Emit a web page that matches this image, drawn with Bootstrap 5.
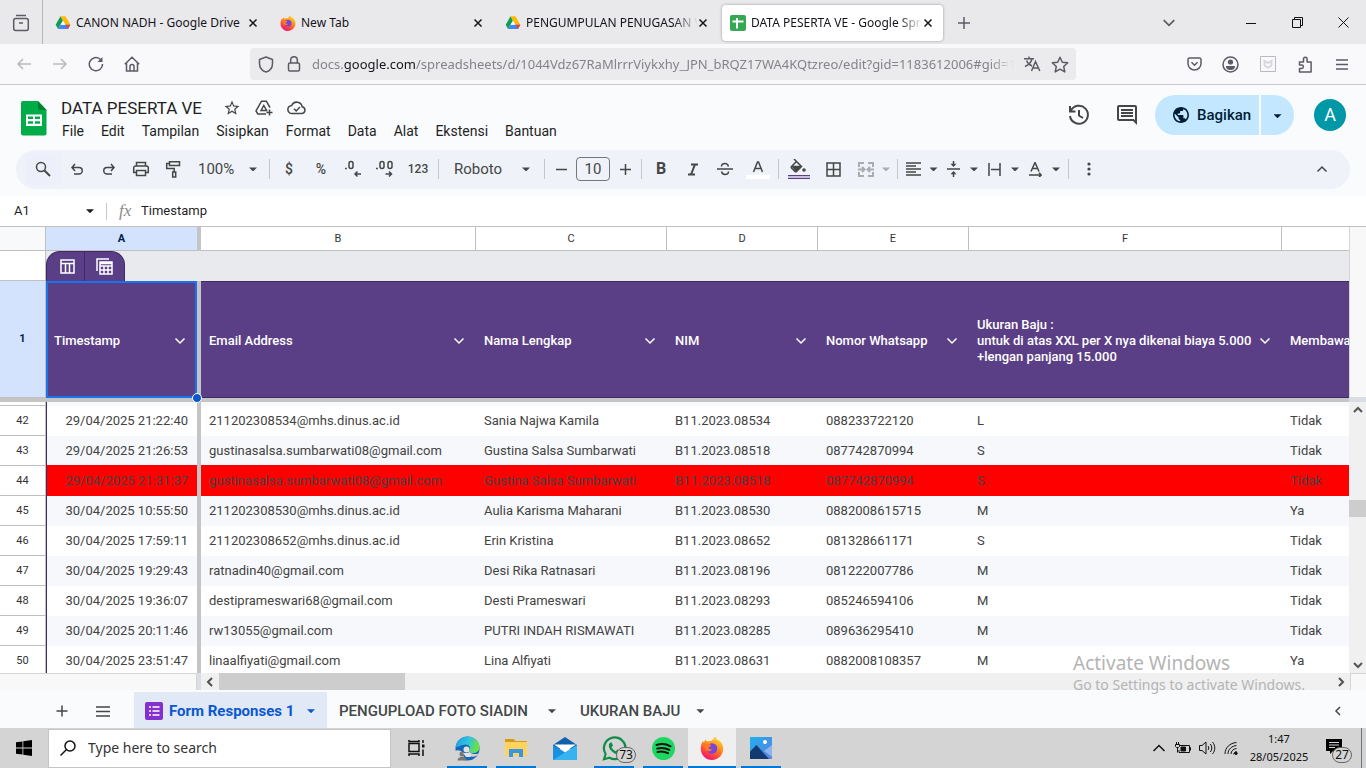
<!DOCTYPE html>
<html lang="id">
<head>
<meta charset="utf-8">
<meta name="viewport" content="width=device-width, initial-scale=1">
<title>DATA PESERTA VE - Google Spreadsheet</title>
<link href="https://cdn.jsdelivr.net/npm/bootstrap@5.3.0/dist/css/bootstrap.min.css" rel="stylesheet">
<style>
:root{--segoe:"Noto Sans","Open Sans",sans-serif;--goog:Roboto,"Liberation Sans",sans-serif;--line:#c0c0c0;--violet:#5b3f86;--violet-dark:#3f2a63;--ink:#444746}
body{font-family:var(--goog);font-size:14px;line-height:20px;color:#1f1f1f;background:#f9fbfd}
button{border:0;background:none;padding:0;color:inherit;font:inherit;flex:none}
svg{display:block;flex:none}
.ln{fill:none;stroke:currentColor;stroke-width:1.5}
.thin{stroke-width:1}
.thick{stroke-width:2}
.mat{fill:currentColor}
a{color:inherit;text-decoration:none}
/* browser chrome */
.tabstrip{height:44px;padding-top:1px;background:#e9e9eb;font-family:var(--segoe);font-size:12px;color:#15141a}
.strip-first{width:42px;color:#5b5b66}
.strip-rule{width:1px;background:#b4b4b9;margin:-1px 2px 0 0}
.strip-tool{color:#5b5b66}
.btab{width:221px;height:36px;margin:0 2px;padding:0 10px 0 8px;border-radius:4px}
.btab.on{background:#fff;box-shadow:0 0 3px rgba(0,0,0,.35)}
.btab-title{overflow:hidden;white-space:nowrap;flex:1;margin-left:5px}
.fade-end{-webkit-mask-image:linear-gradient(90deg,#000 calc(100% - 24px),transparent);mask-image:linear-gradient(90deg,#000 calc(100% - 24px),transparent)}
.winbtn{width:46px;color:#111}
.navbar-ff{height:41px;padding:0 6px;background:#f9f9fb;border-bottom:1px solid #c8c8cc;color:#5b5b66}
.navbar-ff button{width:36px;height:36px}
.navbar-ff button svg{margin:auto}
.dim{opacity:.4}
.side-gap{margin:0 2px}
.urlbox{height:32px;border-radius:4px;background:#ebebed;margin-left:100px;padding:0 2px;width:826px;font-family:var(--segoe);font-size:13px}
.urlbox button{width:28px}
.urltext{overflow:hidden;white-space:nowrap;color:#83838a;flex:1;margin:0 4px}
.urltext b{font-weight:400;color:#15141a}
/* document header */
.dochead{height:65px;padding:0 20px 0 21px}
.titlebox{padding:11px 0 0 14px}
.titlerow{height:24px;gap:14px;color:var(--ink)}
.doctitle{font-size:17px;line-height:24px;color:#1f1f1f;margin:0 7px 0 0;font-weight:400}
.menus{gap:17px;padding:1px 0 0 1px}
.headright{height:60px;color:var(--ink)}
.share{height:40px;border-radius:20px;background:#c2e7ff;color:#001d35;font-weight:500;overflow:hidden}
.share-main{width:106px;padding-left:18px;font-size:15px;border-right:2px solid #f9fbfd}
.share-more{width:33px}
.avatar{width:32px;height:32px;margin-left:20px;border-radius:50%;background:#0097a7;color:#fff;font-size:18px}
/* toolbar */
.tools{height:40px;margin:0 16px;border-radius:20px;background:#eff2f8;padding:0 12px 0 9px;color:var(--ink)}
.tools button{width:32px;height:32px}
.tools .finder{width:36px;background:#edf0fa}
.tools .w34{width:34px}.tools .w41{width:41px}.tools .w26{width:26px}
.tools .zoomer{width:77px;padding:0 9px;font-size:15px}
.tools .fonter{width:99px;padding:0 11px 0 12px;font-size:15px}
.tools .digits{font-size:12px;font-weight:500}
.tsep{width:1px;height:20px;background:#c7c7c7;margin:0 3px}
.fsize{width:34px;height:24px;margin:0 2px;border:1px solid #747775;border-radius:4px;background:none;text-align:center;color:var(--ink);font-size:15px;padding:0}
.caret{width:8px;height:4px;background:currentColor;clip-path:polygon(0 0,100% 0,50% 100%);display:inline-block;flex:none}
.caret-far{margin-left:20px}
/* formula row */
.formula{height:30px;margin-top:7px;background:#fff;font-size:13px}
.formula input{border:0;background:none;padding:0;color:#1f1f1f;outline:0}
.cellref{width:72px;margin-left:14px}
.fsep{width:1px;height:17px;background:#c7c7c7;margin:0 12px}
.fx{font:italic 17px "Liberation Serif",serif;color:#8a8a8a;width:22px}
/* grid */
.sheetarea{border-top:1px solid var(--line);min-height:0;background:#fff}
.viewport{overflow:hidden;min-height:0}
.cells{table-layout:fixed;width:100%;border-collapse:separate;border-spacing:0;font-size:13px;line-height:16px;color:#434343}
.c-num{width:46px}.c-a,.c-d{width:151px}.c-bar{width:4px}.c-b{width:275px}.c-c{width:191px}.c-f{width:313px}
.cells th,.cells td{padding:0 8px;overflow:hidden;white-space:nowrap;font-weight:400}
.cells .bar{background:#c5c5c5;padding:0}
.cells .cols th{height:24px;text-align:center;font-size:11px;border-right:1px solid var(--line);border-bottom:1px solid var(--line);color:#333;padding:0}
.cells .cols .sel,.cells .head .rown{background:#d3e3fd;color:#041e49;font-weight:700}
.cells .rown{font-size:11px;text-align:center;border-right:1px solid var(--line);border-bottom:1px solid var(--line);padding:0;color:#333}
.cells .group td{height:30px;background:#e8eaed;padding:0;vertical-align:bottom}
.cells .group .rown{background:#fff}
.cells .head th{height:117px}
.cells .head th:not(.rown){background:var(--violet);color:#fff;font-weight:500;padding:2px 9px 0 8px;border-top:1px solid var(--violet-dark);border-bottom:1px solid var(--violet-dark)}
.cells .head .picked:not(.rown){position:relative;overflow:visible;border:0;box-shadow:inset 0 0 0 2px #1a73e8}
.cells .head .bar:not(.rown){background:#c5c5c5;border:0;padding:0}
.cells .head .lastcol:not(.rown){padding-right:0}
.knob{position:absolute;right:-5px;bottom:-5px;width:10px;height:10px;border-radius:50%;background:#0b57d0;border:1px solid #fff;z-index:2}
.cells .frozen td{height:4px;padding:0;background:#c5c5c5}
.cells .sliver td,.cells .sliver th{height:4px;padding:0}
.cells .entry th,.cells .entry td{height:30px}
.cells .odd td:not(.bar){background:#f6f8fb}
.cells .flag td:not(.bar){background:#f00;box-shadow:0 -1px 0 #f00}
.cells .stamp{border-left:1px solid var(--violet-dark);text-align:right;padding-right:9px}
.hname{overflow:hidden;flex:1;white-space:pre}
.tablechip{width:79px;height:30px;background:var(--violet);border-radius:14px 14px 0 0;color:#fff;border:1px solid var(--violet-dark);border-bottom:0}
.tablechip button{height:29px;width:37px;padding-left:3px}
.tablechip button+button{width:40px;padding:0;border-left:1px solid var(--violet-dark)}
.gutter{width:17px;flex:none;background:#f0f0f0;color:#555}
.gutter-top{height:170px;background:#f8f8f8;border-left:1px solid #d5d5d5}
.gutter-mid{height:5px;background:#dadce6}
.vthumb{height:17px;background:#cdcdcd;margin-top:86px}
.hscroll{height:17px;background:#f0f0f0;color:#505050}
.hs-left{width:197px;background:#f8f8f8;border-top:1px solid #d5d5d5;border-right:1px solid #d5d5d5}
.hs-mid{width:4px;background:#dadce6}
.hthumb{width:186px;background:#cdcdcd}
.hs-end{width:16px;background:#f8f8f8;border:1px solid #d5d5d5;border-width:1px 0 0 1px}
/* sheet tabs */
.sheets{height:38px;padding-top:2px;color:var(--ink);font-weight:500;font-size:15px}
.sheets button{padding-top:2px}
.sheets .stab{padding:2px 12px 0}
.sheets .on{background:#e1e9f7;color:#0b57d0;font-weight:700;width:193px;padding:2px 12px 0 11px;gap:6px}
/* watermark */
.water{position:absolute;right:57px;bottom:72px;min-width:236px;font-family:var(--segoe);color:#b4b4b4;line-height:22px;font-size:14px;pointer-events:none;white-space:nowrap}
.water strong{font-weight:400;font-size:19px;display:block}
/* taskbar */
.taskbar{height:40px;background:#d4d4d4;color:#111;font-family:var(--segoe)}
.startbtn{width:48px}
.searchbox{width:343px;height:39px;background:#fff;border:1px solid #c4c4c4;font-size:14px;padding-left:11px;gap:12px}
.searchbox input{border:0;outline:0;background:none;flex:1;color:#333;padding:0}
.searchbox input::placeholder{color:#333;opacity:1}
.app{width:48px;height:40px;margin-right:1px;position:relative}
.app.taskview{width:50px;margin-right:2px}
.run::after{content:"";position:absolute;left:4px;right:4px;bottom:0;height:2px;background:#0078d7}
.run.front{background:#efefef}.run.front::after{left:0;right:0}
.count{position:absolute;font-size:12px;line-height:14px;border:1px solid #666;border-radius:8px;background:#d4d4d4;width:20px;text-align:center;left:26px;top:19px}
.tray{width:24px}
.clock{width:72px;font-size:11px;line-height:18px;text-align:center}
.notify{width:34px}
.notify .count{left:13px}
</style>
</head>
<body class="vh-100 d-flex flex-column overflow-hidden position-relative">
<svg width="0" height="0" class="position-absolute" aria-hidden="true">
<defs>
<linearGradient id="ffg" x1=".8" y1="0" x2=".3" y2="1"><stop offset="0" stop-color="#ffe03a"/><stop offset=".45" stop-color="#ff8a16"/><stop offset=".8" stop-color="#ff3647"/><stop offset="1" stop-color="#e31587"/></linearGradient>
<linearGradient id="edg" x1="0" y1="0" x2="1" y2=".3"><stop offset="0" stop-color="#1b9de2"/><stop offset=".55" stop-color="#2fc3df"/><stop offset="1" stop-color="#6be04a"/></linearGradient>
<linearGradient id="phg" x1="0" y1="0" x2="1" y2="1"><stop offset="0" stop-color="#1fb0ee"/><stop offset="1" stop-color="#5f7fe0"/></linearGradient>
<symbol id="drive" viewBox="0 0 24 24"><path fill="#0f9d58" d="M8.2 2 1 14.6 4.6 21l7.3-12.6z"/><path fill="#ffba00" d="M8.2 2h7.5L23 14.6h-7.4z"/><path fill="#4285f4" d="M8.6 14.6H23L19.4 21H4.6z"/><path fill="#ea4335" d="M15.6 14.6H23L19.4 21z"/><path fill="#fff" d="m12 8.7 3.4 5.9H8.6z" opacity=".9"/></symbol>
<symbol id="firefox" viewBox="0 0 24 24"><path fill="url(#ffg)" d="M15.3.5c1 1.4 1.6 2.6 1.8 3.7l1.4-.3c2.9 2.1 4.700 5 4.700 8.600C23.200 18.900 18.200 24 12 24S.8 19 .8 12.700c0-3.200.8-5.800 2.400-7.700l.6 1.800 1.500-3.300 1.600 2.100c1.300-.7 2.800-.7 4.200-.5 1.200-1 2.600-2.600 4.200-4.600z"/><circle cx="12" cy="12.500" r="5.300" fill="#7b45d8"/><path fill="#ff7a22" d="M4.500 8.500c2.500-1.500 5.500-.5 7 1.500-1.700.2-2.500.9-3 2 .8 1.300 2.300 1.800 4 1.200-1.200 2-3.800 2.700-6 1.300C5 13.300 4 11 4.500 8.500z"/></symbol>
<symbol id="close" viewBox="0 0 10 10"><path d="m1.500 1.500 7 7m0-7-7 7" class="ln"/></symbol>
<symbol id="cv" viewBox="0 0 12 12"><path d="m1.500 3.500 4.500 4.500 4.500-4.500" class="ln"/></symbol>
<symbol id="star" viewBox="0 0 24 24"><path d="m22 9.240-7.190-.62L12 2 9.190 8.630 2 9.240l5.460 4.730L5.820 21 12 17.270 18.180 21l-1.630-7.030L22 9.240zM12 15.400l-3.760 2.270 1-4.280-3.320-2.880 4.380-.38L12 6.100l1.710 4.040 4.380.38-3.320 2.880 1 4.280L12 15.400z"/></symbol>
</defs></svg>

<header>
<div class="tabstrip d-flex align-items-center">
 <button class="strip-first d-flex justify-content-center" aria-label="Firefox View"><svg width="18" height="18" viewBox="0 0 18 18" class="ln"><path d="M4 1.500h10"/><rect x="1.700" y="4.500" width="14.600" height="12" rx="2"/><path d="M7 9h4"/></svg></button>
 <span class="strip-rule align-self-stretch"></span>
 <div class="btab d-flex align-items-center"><svg width="16" height="16"><use href="#drive"/></svg><span class="btab-title">CANON NADH - Google Drive</span><button aria-label="Tutup"><svg width="10" height="10"><use href="#close"/></svg></button></div>
 <div class="btab d-flex align-items-center"><svg width="16" height="16"><use href="#firefox"/></svg><span class="btab-title">New Tab</span><button aria-label="Tutup"><svg width="10" height="10"><use href="#close"/></svg></button></div>
 <div class="btab d-flex align-items-center"><svg width="16" height="16"><use href="#drive"/></svg><span class="btab-title fade-end">PENGUMPULAN PENUGASAN VE</span><button aria-label="Tutup"><svg width="10" height="10"><use href="#close"/></svg></button></div>
 <div class="btab on d-flex align-items-center"><svg width="16" height="16" viewBox="0 0 16 16"><rect width="16" height="16" rx="2" fill="#34a853"/><path d="M2.500 6.500h11M7 3v10.500" stroke="#fff" stroke-width="2"/></svg><span class="btab-title fade-end">DATA PESERTA VE - Google Spreadsheet</span><button aria-label="Tutup"><svg width="10" height="10"><use href="#close"/></svg></button></div>
 <button class="strip-tool ms-2 ps-1" aria-label="Tab baru"><svg width="14" height="14" viewBox="0 0 14 14" class="ln"><path d="M7 1v12M1 7h12"/></svg></button>
 <button class="strip-tool ms-auto me-5 px-1" aria-label="Daftar tab"><svg width="14" height="14"><use href="#cv"/></svg></button>
 <button class="winbtn d-flex justify-content-center" aria-label="Minimalkan"><svg width="10" height="10" viewBox="0 0 10 10" class="ln thin"><path d="M0 5.500h10"/></svg></button>
 <button class="winbtn d-flex justify-content-center" aria-label="Pulihkan"><svg width="11" height="11" viewBox="0 0 11 11" class="ln thin"><path d="M.5 2.500h8v8h-8zM2.500 2.500v-2h8v8h-2"/></svg></button>
 <button class="winbtn d-flex justify-content-center" aria-label="Tutup jendela"><svg width="11" height="11" viewBox="0 0 11 11" class="ln thin"><path d="m.5.5 10 10m0-10-10 10"/></svg></button>
</div>
<div class="navbar-ff d-flex align-items-center">
 <div class="d-flex">
 <button class="d-flex dim" aria-label="Kembali"><svg width="16" height="16" viewBox="0 0 16 16" class="ln"><path d="M15 8H2m5-5L2 8l5 5"/></svg></button>
 <button class="d-flex dim" aria-label="Maju"><svg width="16" height="16" viewBox="0 0 16 16" class="ln"><path d="M1 8h13M9 3l5 5-5 5"/></svg></button>
 <button class="d-flex" aria-label="Muat ulang"><svg width="16" height="16" viewBox="0 0 16 16" class="ln"><path d="M14.500 8A6.600 6.600 0 1 1 12 3l1.500 1.500"/><path d="M14.500 1v5h-5z" fill="currentColor" stroke="none"/></svg></button>
 <button class="d-flex" aria-label="Beranda"><svg width="16" height="16" viewBox="0 0 16 16" class="ln"><path d="M.8 8.200 8 1.300l7.200 6.900M2.500 7v8h11V7M6 15v-4.500a2 2 0 0 1 4 0V15"/></svg></button>
 </div>
 <div class="urlbox d-flex align-items-center">
  <button class="d-flex" aria-label="Perlindungan"><svg width="16" height="17" viewBox="0 0 16 17" class="ln"><path d="M8 1 14.500 3.500v4C14.500 12 11.500 15 8 16 4.500 15 1.500 12 1.500 7.500v-4z" stroke-linejoin="round"/></svg></button>
  <button class="d-flex" aria-label="Sambungan aman"><svg width="14" height="16" viewBox="0 0 14 16" class="ln"><rect x="1.500" y="7" width="11" height="8" rx="1.500"/><path d="M3.700 7V4a3.300 3.300 0 0 1 6.600 0v3"/></svg></button>
  <div class="urltext fade-end">docs.<b>google.com</b>/spreadsheets/d/1044Vdz67RaMlrrrViykxhy_JPN_bRQZ17WA4KQtzreo/edit?gid=1183612006#gid=1183612006</div>
  <button class="d-flex" aria-label="Terjemahkan"><svg width="17" height="16" viewBox="0 0 17 16" class="ln"><path d="M0 2.700h10M5 .5v2M8 3C7 6.500 4.500 9 1 10.500M2.500 4.500c1 2.500 3 4.500 5.500 5.500M7.500 15l4-9.500L15.800 15M9 12h5.500"/></svg></button>
  <button class="d-flex" aria-label="Markah"><svg width="18" height="17" viewBox="0 0 18 17" class="ln"><path d="m9 1.200 2.300 5 5.400.6-4 3.700 1.100 5.400L9 13.200l-4.800 2.700 1.100-5.400-4-3.700 5.400-.6z" stroke-linejoin="round"/></svg></button>
 </div>
 <div class="ms-auto d-flex">
 <button class="d-flex" aria-label="Pocket"><svg width="15" height="14" viewBox="0 0 15 14" class="ln"><path d="M2.500 1h10A1.500 1.500 0 0 1 14 2.500v4a6.500 6.500 0 0 1-13 0v-4A1.500 1.500 0 0 1 2.500 1zM4.500 5.300l3 2.900 3-2.900"/></svg></button>
 <button class="d-flex" aria-label="Akun"><svg width="17" height="17" viewBox="0 0 17 17"><circle cx="8.500" cy="8.500" r="7.500" class="ln"/><circle cx="8.500" cy="6" r="2.600" fill="currentColor"/><path d="M4 10h9c0 3-2 4-4.500 4S4 13 4 10z" fill="currentColor"/></svg></button>
 <button class="d-flex side-gap dim" aria-label="McAfee"><svg width="16" height="16" viewBox="0 0 16 16" class="ln thin"><path d="M.5.5h15v15H.5z"/><path d="M4.500 5v4.500L8 11.500l3.500-2V5L8 6.800z" stroke-width="2" opacity=".5"/></svg></button>
 <button class="d-flex" aria-label="Ekstensi"><svg width="16" height="17" viewBox="0 0 16 17" class="ln"><path d="M1.500 6h4V3a1.800 1.800 0 0 1 3.600 0v3h4v10H1.500v-3.500h2.200a1.700 1.700 0 0 0 0-3.400H1.500z" stroke-linejoin="round"/></svg></button>
 <button class="d-flex" aria-label="Menu"><svg width="12" height="11" viewBox="0 0 12 11" class="ln"><path d="M0 1h12M0 5.500h12M0 10h12"/></svg></button>
 </div>
</div>
</header>

<section class="dochead d-flex">
 <svg class="mt-3" width="26" height="35" viewBox="0 0 26 35"><path fill="#00ac47" d="M2 0h15l8.500 9v23.500a2 2 0 0 1-2 2H2a2 2 0 0 1-2-2V2a2 2 0 0 1 2-2z"/><path fill="#00832d" d="M17 0v7a2 2 0 0 0 2 2h6.500z"/><path fill="#fff" d="M5 13.500h16V25H5zm2 2v2.500h5v-2.500zm7 0v2.500h5v-2.500zm-7 4.700v2.600h5v-2.600zm7 0v2.600h5v-2.600z"/></svg>
 <div class="titlebox">
  <div class="titlerow d-flex align-items-center"><h1 class="doctitle">DATA PESERTA VE</h1>
   <button aria-label="Bintangi"><svg width="18" height="18" class="mat"><use href="#star"/></svg></button>
   <button aria-label="Pindahkan"><svg width="18" height="18" viewBox="0 0 18 18" class="ln"><path d="M11 15H2.800L1 12l5.500-9.800h4.800L15 8.500M6 11.500l2.800-5 2.800 5zM14.500 10.500v6m-3-3h6"/></svg></button>
   <button aria-label="Status dokumen"><svg width="20" height="16" viewBox="0 0 20 16" class="ln"><path d="M5 13.500a4 4 0 0 1-.3-8 5.500 5.500 0 0 1 10.500 1.300 3.400 3.400 0 0 1-.2 6.700zM7 8.700l2.200 2.200L13 7"/></svg></button>
  </div>
  <nav class="menus d-flex"><a href="#">File</a><a href="#">Edit</a><a href="#">Tampilan</a><a href="#">Sisipkan</a><a href="#">Format</a><a href="#">Data</a><a href="#">Alat</a><a href="#">Ekstensi</a><a href="#">Bantuan</a></nav>
 </div>
 <div class="headright ms-auto d-flex align-items-center">
  <button class="me-4" aria-label="Riwayat"><svg width="24" height="24" viewBox="0 0 24 24" class="ln thick"><path d="M4 7.500A9 9 0 1 1 3 13M3 3v5.500h5.500M12 7v5.500l4 2.500"/></svg></button>
  <button class="me-3" aria-label="Komentar"><svg width="24" height="24" viewBox="0 0 24 24" class="mat"><path d="M22 4c0-1.100-.9-2-2-2H4c-1.100 0-2 .9-2 2v12c0 1.100.9 2 2 2h14l4 4V4zm-2 13.200-1.200-1.200H4V4h16zM6 12h12v2H6zm0-3h12v2H6zm0-3h12v2H6z"/></svg></button>
  <div class="share d-flex">
   <button class="share-main d-flex align-items-center gap-2"><svg width="16" height="16" viewBox="2 2 20 20" class="mat"><path d="M12 2C6.480 2 2 6.480 2 12s4.480 10 10 10 10-4.480 10-10S17.520 2 12 2zm-1 17.930c-3.950-.49-7-3.850-7-7.930 0-.62.080-1.210.210-1.790L9 15v1c0 1.100.9 2 2 2v1.930zm6.900-2.540c-.26-.81-1-1.390-1.900-1.390h-1v-3c0-.55-.45-1-1-1H8v-2h2c.55 0 1-.45 1-1V7h2c1.100 0 2-.9 2-2v-.41c2.930 1.190 5 4.060 5 7.410 0 2.080-.8 3.970-2.100 5.390z"/></svg>Bagikan</button>
   <button class="share-more" aria-label="Opsi berbagi"><span class="caret align-middle"></span></button>
  </div>
  <button class="avatar">A</button>
 </div>
</section>

<section class="tools d-flex align-items-center" aria-label="Toolbar">
 <button class="finder d-flex align-items-center justify-content-center" aria-label="Menu"><svg width="16" height="16" viewBox="0 0 16 16" class="ln"><circle cx="6" cy="6" r="4.500"/><path d="m9.500 9.500 5.500 5.500" stroke-width="2"/></svg></button>
 <button class="d-flex align-items-center justify-content-center" aria-label="Urungkan"><svg width="14" height="14" viewBox="0 0 14 14" class="ln"><path d="M5 2 2 5.500 5 9M2 5.500h7a3.200 3.200 0 0 1 0 6.500H4"/></svg></button>
 <button class="d-flex align-items-center justify-content-center" aria-label="Ulangi"><svg width="14" height="14" viewBox="0 0 14 14" class="ln"><path d="m9 2 3 3.500L9 9m3-3.500H5a3.200 3.200 0 0 0 0 6.500h5"/></svg></button>
 <button class="d-flex align-items-center justify-content-center" aria-label="Cetak"><svg width="18" height="16" viewBox="0 0 18 16" class="ln"><path d="M4.500 5V1.500h9V5M4.500 11.500H1.700V7a2 2 0 0 1 2-2h10.600a2 2 0 0 1 2 2v4.500h-2.800"/><path d="M4.500 9.500h9v5h-9z"/></svg></button>
 <button class="d-flex align-items-center justify-content-center" aria-label="Salin format"><svg width="16" height="18" viewBox="0 0 16 18" class="ln"><path d="M4.500 1.700h10v3.800h-10zM4.500 3.500H1.700v5h7.500V12"/><path d="M7.700 12h3v5h-3z"/></svg></button>
 <button class="zoomer d-flex align-items-center justify-content-between">100%<span class="caret"></span></button>
 <span class="tsep"></span>
 <button class="fw-medium">$</button><button class="fw-medium">%</button>
 <button class="d-flex align-items-center justify-content-center" aria-label="Kurangi desimal"><svg width="18" height="18" viewBox="0 0 18 18" class="ln"><path d="M1 8.500h1.800"/><rect x="5" y="1.500" width="4" height="7" rx="2"/><path d="M17 14h-6m2.500-2.500L11 14l2.500 2.500"/></svg></button>
 <button class="d-flex align-items-center justify-content-center" aria-label="Tambah desimal"><svg width="18" height="18" viewBox="0 0 18 18" class="ln"><path d="M0 8.500h1.800"/><rect x="4" y="1.500" width="4" height="7" rx="2"/><rect x="12" y="1.500" width="4" height="7" rx="2"/><path d="M9.500 14h6M13 11.500l2.500 2.500-2.500 2.500"/></svg></button>
 <button class="w34 digits">123</button>
 <span class="tsep"></span>
 <button class="fonter d-flex align-items-center justify-content-between">Roboto<span class="caret"></span></button>
 <span class="tsep"></span>
 <button class="w26 d-flex align-items-center justify-content-center" aria-label="Perkecil"><svg width="11" height="11" viewBox="0 0 11 11" class="ln"><path d="M0 5.500h11"/></svg></button>
 <input class="fsize" value="10" aria-label="Ukuran font">
 <button class="w26 d-flex align-items-center justify-content-center" aria-label="Perbesar"><svg width="11" height="11" viewBox="0 0 11 11" class="ln"><path d="M0 5.500h11M5.500 0v11"/></svg></button>
 <span class="tsep"></span>
 <button class="fw-bold fs-6">B</button>
 <button class="d-flex align-items-center justify-content-center" aria-label="Miring"><svg width="12" height="13" viewBox="0 0 12 13" class="ln thick"><path d="M4 1.500h7M1 11.500h7M8 1.500l-4 10"/></svg></button>
 <button class="d-flex align-items-center justify-content-center" aria-label="Coret"><svg width="16" height="14" viewBox="0 0 16 14" class="ln"><path d="M0 7h16M11.500 4.500C11 2.500 10 1.500 8 1.500S4.500 2.500 4.500 4.500M4.500 9.500c.5 2 1.500 3 3.500 3s3.500-1 3.500-3"/></svg></button>
 <button class="w34 d-flex align-items-center justify-content-center" aria-label="Warna teks"><svg width="24" height="20" viewBox="0 0 24 20"><path d="m7.500 13 4-10h1l4 10M9 9.500h6" class="ln"/><path fill="#fff" d="M0 16h24v4H0z"/></svg></button>
 <span class="tsep"></span>
 <button class="w34 d-flex align-items-center justify-content-center" aria-label="Warna isi"><svg width="24" height="20" viewBox="0 0 24 20"><path d="m7 0 7.500 7.500-5 5a1 1 0 0 1-1.500 0L4.500 9a1 1 0 0 1 0-1.500L9 3M5 7.500h9" class="ln"/><path d="M5 8h9l-5 5z" fill="currentColor"/><circle cx="17" cy="11" r="1.800" fill="currentColor"/><path fill="#c9bedd" d="M1 16h22v4H1z"/><path fill="#5b3f86" d="M1 16h22v1H1zM1 19h22v1H1z"/></svg></button>
 <button class="w34 d-flex align-items-center justify-content-center" aria-label="Batas"><svg width="15" height="15" viewBox="0 0 15 15" class="ln"><path d="M1 1h13v13H1zM7.500 1v13M1 7.500h13"/></svg></button>
 <button class="d-flex align-items-center justify-content-center dim" aria-label="Gabungkan"><svg width="16" height="15" viewBox="0 0 16 15" class="ln thick"><path d="M6 1H1v4M10 1h5v4M1 10v4h5M15 10v4h-5M0 7.500h6M16 7.500h-6M4 5l2.500 2.500L4 10M12 5 9.500 7.500 12 10"/></svg></button>
 <span class="caret dim me-1"></span>
 <span class="tsep"></span>
 <button class="w41 d-flex align-items-center justify-content-around" aria-label="Rata horizontal"><svg width="15" height="14" viewBox="0 0 15 14" class="ln"><path d="M0 1h15M0 4h10M0 7h15M0 10h10M0 13h15"/></svg><span class="caret"></span></button>
 <button class="w41 d-flex align-items-center justify-content-around" aria-label="Rata vertikal"><svg width="13" height="16" viewBox="0 0 13 16" class="ln"><path d="M0 8h13M6.500 0v4M6.500 12v4"/><path d="M3.500 2.800h6l-3 3.200zM3.500 13.200h6l-3-3.200z" fill="currentColor" stroke="none"/></svg><span class="caret"></span></button>
 <button class="w41 d-flex align-items-center justify-content-around" aria-label="Pengemasan"><svg width="13" height="13" viewBox="0 0 13 13" class="ln"><path d="M1 0v13M12 0v13M3 6.500h9"/></svg><span class="caret"></span></button>
 <button class="w41 d-flex align-items-center justify-content-around" aria-label="Rotasi"><svg width="13" height="15" viewBox="0 0 13 15" class="ln"><path d="m2 9.500 4-9 4 9M3.500 6.500h5M0 13h12M10 10.800l2.200 2.200-2.200 2.200"/></svg><span class="caret"></span></button>
 <span class="tsep"></span>
 <button class="w34 d-flex align-items-center justify-content-center" aria-label="Lainnya"><svg width="4" height="14" viewBox="0 0 4 14" class="mat"><circle cx="2" cy="2" r="1.600"/><circle cx="2" cy="7" r="1.600"/><circle cx="2" cy="12" r="1.600"/></svg></button>
 <button class="ms-auto d-flex align-items-center justify-content-center" aria-label="Sembunyikan menu"><svg width="12" height="12" viewBox="0 0 12 12" class="ln"><path d="m1.500 8.500 4.500-4.500 4.500 4.500"/></svg></button>
</section>

<section class="formula d-flex align-items-center">
 <input class="cellref" value="A1" aria-label="Kotak nama"><span class="caret"></span>
 <span class="fsep"></span>
 <span class="fx">fx</span>
 <input class="flex-grow-1" value="Timestamp" aria-label="Rumus">
</section>

<main class="sheetarea flex-grow-1 d-flex">
 <div class="viewport flex-grow-1">
 <table class="cells">
 <colgroup><col class="c-num"><col class="c-a"><col class="c-bar"><col class="c-b"><col class="c-c"><col class="c-d"><col class="c-d"><col class="c-f"><col></colgroup>
 <thead>
 <tr class="cols"><th class="bg-light"></th><th class="sel border-end-0">A</th><th class="bar border-0"></th><th>B</th><th>C</th><th>D</th><th>E</th><th>F</th><th class="border-end-0"></th></tr>
 <tr class="group"><td class="rown"></td><td><div class="tablechip d-flex"><button class="d-flex align-items-center justify-content-center" aria-label="Tabel"><svg width="15" height="15" viewBox="0 0 15 15" class="ln"><path d="M1 1h13v13H1zM1 4.500h13M5.500 5v9M9.500 5v9"/></svg></button><button class="d-flex align-items-center justify-content-center" aria-label="Tampilan tabel"><svg width="17" height="17" viewBox="0 0 17 17" class="ln"><path d="M1 13V1h12"/><path d="M4 4h12v12H4zM4 5.500h12M4 8h12M4 12h12M8 8v8M12 8v8"/></svg></button></div></td><td class="bar"></td><td colspan="6"></td></tr>
 <tr class="head"><th class="rown">1</th>
 <th class="picked"><div class="d-flex align-items-center"><span class="hname">Timestamp</span><svg width="16" height="12"><use href="#cv"/></svg></div><i class="knob"></i></th><th class="bar"></th>
 <th><div class="d-flex align-items-center"><span class="hname">Email Address</span><svg width="16" height="12"><use href="#cv"/></svg></div></th>
 <th><div class="d-flex align-items-center"><span class="hname">Nama Lengkap</span><svg width="16" height="12"><use href="#cv"/></svg></div></th>
 <th><div class="d-flex align-items-center"><span class="hname">NIM</span><svg width="16" height="12"><use href="#cv"/></svg></div></th>
 <th><div class="d-flex align-items-center"><span class="hname">Nomor Whatsapp</span><svg width="16" height="12"><use href="#cv"/></svg></div></th>
 <th><div class="d-flex align-items-center"><span class="hname">Ukuran Baju :
untuk di atas XXL per X nya dikenai biaya 5.000
+lengan panjang 15.000</span><svg width="16" height="12"><use href="#cv"/></svg></div></th>
 <th class="lastcol">Membawa</th></tr>
 <tr class="frozen"><td colspan="9"></td></tr>
 </thead>
 <tbody>
 <tr class="sliver odd"><th class="rown"></th><td class="stamp"></td><td class="bar"></td><td colspan="6"></td></tr>
 <tr class="entry"><th class="rown">42</th><td class="stamp">29/04/2025 21:22:40</td><td class="bar"></td><td>211202308534@mhs.dinus.ac.id</td><td>Sania Najwa Kamila</td><td>B11.2023.08534</td><td>088233722120</td><td>L</td><td>Tidak</td></tr>
 <tr class="entry odd"><th class="rown">43</th><td class="stamp">29/04/2025 21:26:53</td><td class="bar"></td><td>gustinasalsa.sumbarwati08@gmail.com</td><td>Gustina Salsa Sumbarwati</td><td>B11.2023.08518</td><td>087742870994</td><td>S</td><td>Tidak</td></tr>
 <tr class="entry flag"><th class="rown">44</th><td class="stamp">29/04/2025 21:31:37</td><td class="bar"></td><td>gustinasalsa.sumbarwati08@gmail.com</td><td>Gustina Salsa Sumbarwati</td><td>B11.2023.08518</td><td>087742870994</td><td>S</td><td>Tidak</td></tr>
 <tr class="entry odd"><th class="rown">45</th><td class="stamp">30/04/2025 10:55:50</td><td class="bar"></td><td>211202308530@mhs.dinus.ac.id</td><td>Aulia Karisma Maharani</td><td>B11.2023.08530</td><td>0882008615715</td><td>M</td><td>Ya</td></tr>
 <tr class="entry"><th class="rown">46</th><td class="stamp">30/04/2025 17:59:11</td><td class="bar"></td><td>211202308652@mhs.dinus.ac.id</td><td>Erin Kristina</td><td>B11.2023.08652</td><td>081328661171</td><td>S</td><td>Tidak</td></tr>
 <tr class="entry odd"><th class="rown">47</th><td class="stamp">30/04/2025 19:29:43</td><td class="bar"></td><td>ratnadin40@gmail.com</td><td>Desi Rika Ratnasari</td><td>B11.2023.08196</td><td>081222007786</td><td>M</td><td>Tidak</td></tr>
 <tr class="entry"><th class="rown">48</th><td class="stamp">30/04/2025 19:36:07</td><td class="bar"></td><td>destiprameswari68@gmail.com</td><td>Desti Prameswari</td><td>B11.2023.08293</td><td>085246594106</td><td>M</td><td>Tidak</td></tr>
 <tr class="entry odd"><th class="rown">49</th><td class="stamp">30/04/2025 20:11:46</td><td class="bar"></td><td>rw13055@gmail.com</td><td>PUTRI INDAH RISMAWATI</td><td>B11.2023.08285</td><td>089636295410</td><td>M</td><td>Tidak</td></tr>
 <tr class="entry"><th class="rown">50</th><td class="stamp">30/04/2025 23:51:47</td><td class="bar"></td><td>linaalfiyati@gmail.com</td><td>Lina Alfiyati</td><td>B11.2023.08631</td><td>0882008108357</td><td>M</td><td>Ya</td></tr>
 </tbody>
 </table>
 </div>
 <div class="gutter d-flex flex-column">
  <div class="gutter-top"></div><div class="gutter-mid"></div>
  <svg class="mx-auto mt-1" width="10" height="8" viewBox="0 0 10 8"><path class="ln thick" d="m1 6 4-4 4 4"/></svg>
  <div class="vthumb"></div>
  <svg class="mx-auto mt-auto mb-1" width="10" height="8" viewBox="0 0 10 8"><path class="ln thick" d="m1 2 4 4 4-4"/></svg>
 </div>
</main>
<div class="hscroll d-flex align-items-stretch">
 <div class="hs-left"></div><div class="hs-mid"></div>
 <button class="px-1 d-flex align-items-center" aria-label="Gulir kiri"><svg width="10" height="10" viewBox="0 0 10 10" class="ln thick"><path d="M7 1 3 5l4 4"/></svg></button>
 <div class="hthumb"></div>
 <button class="ms-auto pe-1 d-flex align-items-center" aria-label="Gulir kanan"><svg width="10" height="10" viewBox="0 0 10 10" class="ln thick"><path d="m3 1 4 4-4 4"/></svg></button>
 <div class="hs-end"></div>
</div>

<nav class="sheets d-flex" aria-label="Sheet">
 <button class="ps-5 pe-4 d-flex align-items-center" aria-label="Tambah sheet"><svg class="ms-2" width="12" height="12" viewBox="0 0 12 12"><path d="M6 .5v11M.5 6h11" class="ln"/></svg></button>
 <button class="me-4 ps-1 d-flex align-items-center" aria-label="Semua sheet"><svg width="14" height="11" viewBox="0 0 14 11" class="ln"><path d="M0 1h14M0 5.500h14M0 10h14"/></svg></button>
 <button class="stab on d-flex align-items-center"><svg width="18" height="18" viewBox="0 0 18 18"><rect width="18" height="18" rx="2" fill="#8430ce"/><path stroke="#fff" stroke-width="1.500" d="M4 5h2M4 9h2M4 13h2M7.500 5h7M7.500 9h7M7.500 13h7"/></svg>Form Responses 1<span class="caret ms-auto"></span></button>
 <button class="stab d-flex align-items-center">PENGUPLOAD FOTO SIADIN<span class="caret caret-far"></span></button>
 <button class="stab d-flex align-items-center">UKURAN BAJU<span class="caret ms-3"></span></button>
 <button class="ms-auto me-4 d-flex align-items-center" aria-label="Panel samping"><svg width="8" height="10" viewBox="0 0 8 10" class="ln"><path d="M6 1 2 5l4 4"/></svg></button>
</nav>

<footer class="taskbar d-flex align-items-center">
 <button class="startbtn d-flex justify-content-center" aria-label="Mulai"><svg width="16" height="16" viewBox="0 0 16 16"><path d="m0 2.300 6.500-.9v6.200H0zM7.300 1.300 16 0v7.600H7.300zM0 8.400h6.500v6.200L0 13.700zM7.300 8.400H16V16l-8.700-1.300z"/></svg></button>
 <label class="searchbox d-flex align-items-center"><svg width="16" height="16" viewBox="0 0 16 16" class="ln"><circle cx="10" cy="6" r="5"/><path d="M6.500 9.500.5 15.500"/></svg><input type="text" placeholder="Type here to search" aria-label="Search"></label>
 <button class="app taskview d-flex align-items-center justify-content-center" aria-label="Task View"><svg width="17" height="16" viewBox="0 0 17 16" class="ln"><path d="M1 3.500h10v8H1zM1 0v1.500h10V0M1 16v-2h10v2M15 0v3M15 9.500V16"/><path d="M14 4.500h2.500v3H14z" fill="currentColor" stroke="none"/></svg></button>
 <button class="app run d-flex align-items-center justify-content-center" aria-label="Edge"><svg width="25" height="25" viewBox="0 0 25 25"><circle cx="12.500" cy="12.500" r="12" fill="#1467b8"/><path fill="url(#edg)" d="M.7 11C2 4 7 .5 12.800.5 20 .5 24.500 6 24.500 11c0 4-3 6-6.500 6-3 0-4.500-1-3.500-2.500 1.500-2.500 0-6-4-6-4.500 0-7.500 3-9.800 2.500z"/><path fill="#d4d4d4" d="M14 14c0 3 4 5 10 3.500-3 4-8 4-11 1zM0 15c3-2 7 0 9 3l-1 7H0z"/><circle cx="7" cy="18" r="2.500" fill="#777"/><path fill="#777" d="M2.500 24.500c0-5 9-5 9 0z"/><circle cx="11.500" cy="13.500" r="3" fill="#e2e2e2"/><path fill="#e2e2e2" d="M8 17h7l1 4h-5z"/></svg></button>
 <button class="app run d-flex align-items-center justify-content-center" aria-label="File Explorer"><svg width="22" height="20" viewBox="0 0 22 20"><path fill="#d89b13" d="M0 1h8.500l2 2H22v4H0z"/><path fill="#ffd35c" d="M0 4h22v14H0z"/><path fill="#3a95e0" d="M4 19v-8h14v8h-4v-4H8v4z"/></svg></button>
 <button class="app d-flex align-items-center justify-content-center" aria-label="Mail"><svg width="24" height="23" viewBox="0 0 24 23"><path fill="#0f5fae" d="m12 0 12 8v4H0V8z"/><path fill="#1a8fe0" d="M0 8v15h24z"/><path fill="#35b4f1" d="M24 8v15H0z"/><path fill="#fff" d="M1 7.500h22L12 15z"/></svg></button>
 <button class="app run d-flex align-items-center justify-content-center" aria-label="WhatsApp"><svg width="25" height="25" viewBox="0 0 25 25"><path d="M2 23.200 3.600 18A10.800 10.800 0 1 1 7.500 21.700z" fill="none" stroke="#128c4b" stroke-width="2.200"/><path fill="#128c4b" d="M8.500 6.500c-3 2-1.500 6 1 8.500s6 4.500 8.500 2l.4-1.700-3-1.700-1.600 1.600c-2-.8-3.500-2.200-4.200-4.200L11 9.700 9.700 6.500z"/></svg><span class="count">73</span></button>
 <button class="app run d-flex align-items-center justify-content-center" aria-label="Spotify"><svg width="23" height="23" viewBox="0 0 23 23"><circle cx="11.500" cy="11.500" r="11.500" fill="#1ed760"/><path d="M4.500 8c5-1.500 10-1 14 1.300M5 11.600c4.500-1.200 8.500-.7 12.300 1.300M5.500 15c4-1 7-.5 10.500 1.200" fill="none" stroke="#111" stroke-width="2" stroke-linecap="round"/></svg></button>
 <button class="app run front d-flex align-items-center justify-content-center" aria-label="Firefox"><svg width="24" height="24"><use href="#firefox"/></svg></button>
 <button class="app run d-flex align-items-center justify-content-center" aria-label="Foto"><svg width="22" height="22" viewBox="0 0 22 22"><path fill="url(#phg)" d="M0 0h22v22H0z"/><path fill="#fff" opacity=".35" d="m22 8-8 6 8 6z"/><path fill="#123a72" d="M0 14.500 6.500 8 19 22H0z"/><circle cx="15" cy="5" r="2" fill="#fff"/></svg></button>
 <button class="tray ms-auto d-flex justify-content-center" aria-label="Ikon tersembunyi"><svg width="12" height="12" viewBox="0 0 12 12" class="ln"><path d="m.5 9 5.500-5.500L11.500 9"/></svg></button>
 <button class="tray d-flex justify-content-center" aria-label="Baterai"><svg width="16" height="12" viewBox="0 0 16 12" class="ln thin"><path d="M5 3.500h9.500v7H4V8M14.500 5.500h1v3M1.500 0v2M3.500 0v2M.5 2.500h4v2l-1 1h-2l-1-1zM2.500 5.500v5"/><path d="M6 5h4.500v4H6z" fill="currentColor"/></svg></button>
 <button class="tray d-flex justify-content-center" aria-label="Volume"><svg width="17" height="14" viewBox="0 0 17 14" class="ln thin"><path d="M.5 4.500h2.500L7 1v12L3 9.500H.5zM9 5c1 1 1 3 0 4M11.300 3c2 2 2 6 0 8M13.500 1c3 3.500 3 8.500 0 12"/></svg></button>
 <button class="tray d-flex justify-content-center" aria-label="Jaringan"><svg width="14" height="14" viewBox="0 0 14 14" class="ln thin"><path d="M1 13C1 6.500 6 2 12.500 1.500M4 13c0-5 4-8 8.500-8.500M7 13c0-3 2.500-5.300 5.500-5.500M9.800 13.500c0-1.500 1-2.800 2.700-3"/><circle cx="12" cy="12.300" r="1.200" fill="currentColor"/></svg></button>
 <div class="clock me-1">1:47<br>28/05/2025</div>
 <button class="app notify d-flex align-items-center justify-content-center me-0" aria-label="Notifikasi"><svg class="me-1 mb-1" width="16" height="15" viewBox="0 0 16 15"><path d="M0 0h16v12h-9l-3 3v-3H0z"/><path stroke="#d4d4d4" d="M3 3.500h10M3 6h10M3 8.500h6"/></svg><span class="count">27</span></button>
 <span class="align-self-stretch ms-2 me-1 border-start border-secondary"></span>
</footer>
<div class="water"><strong>Activate Windows</strong>Go to Settings to activate Windows.</div>
<script src="https://cdn.jsdelivr.net/npm/bootstrap@5.3.0/dist/js/bootstrap.bundle.min.js"></script>
</body>
</html>
